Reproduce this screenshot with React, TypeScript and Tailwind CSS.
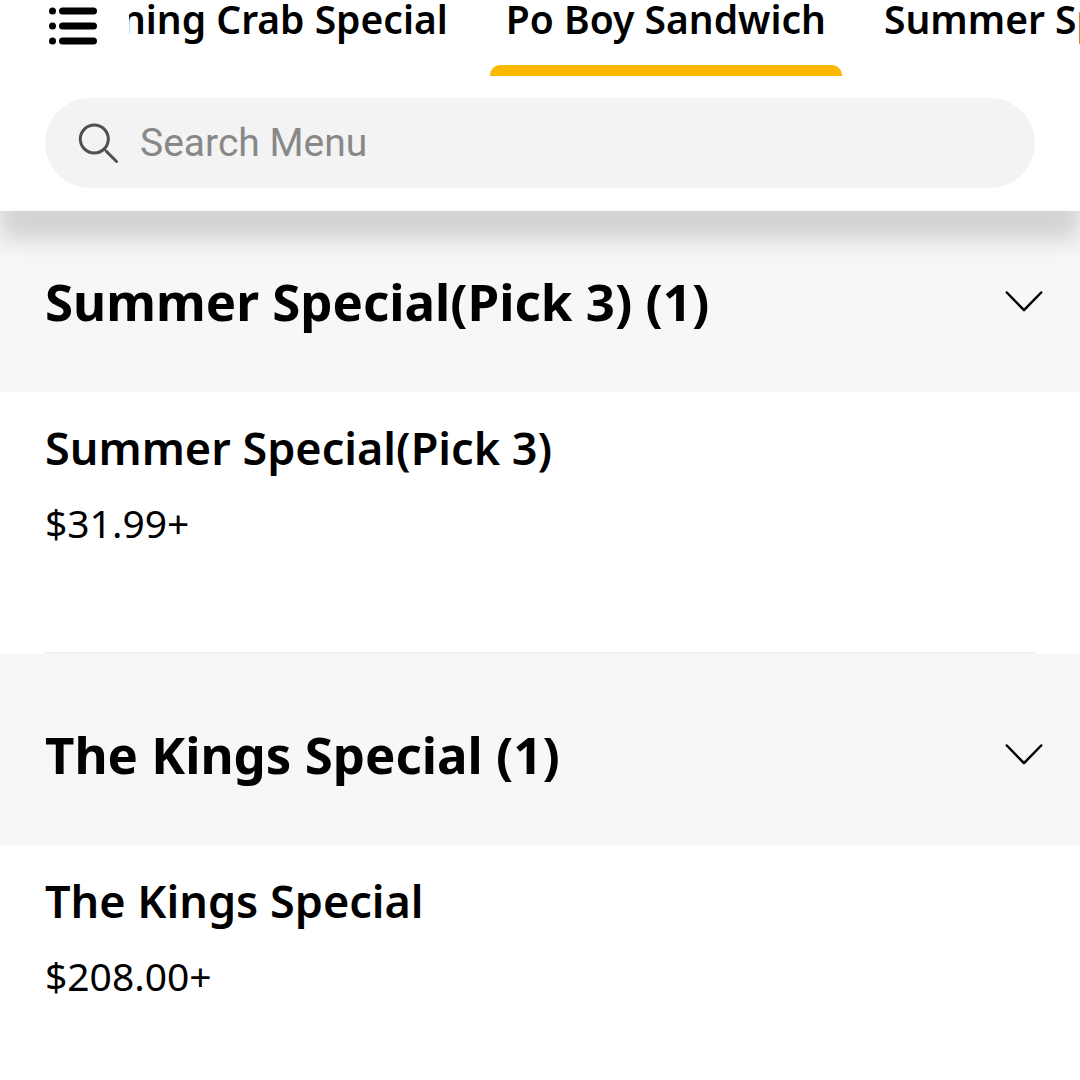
import React, { useEffect, useRef, useState } from "react"

type MenuItem = { name: string; price: string }
type MenuSection = { title: string; items: MenuItem[] }

const tabs = ["Evening Crab Special", "Po Boy Sandwich", "Summer Special(Pick 3)"]

const sections: MenuSection[] = [
  {
    title: "Summer Special(Pick 3)",
    items: [{ name: "Summer Special(Pick 3)", price: "$31.99+" }],
  },
  {
    title: "The Kings Special",
    items: [{ name: "The Kings Special", price: "$208.00+" }],
  },
]

// how much of the previous tab stays visible left of the active one
const TAB_PEEK = 361

function ListIcon() {
  return (
    <svg width="48" height="38" viewBox="0 0 48 38" aria-hidden="true">
      {[4, 19, 34].map((y) => (
        <g key={y}>
          <circle cx="3.5" cy={y} r="3.5" />
          <path d={`M13.5 ${y}H44.5`} stroke="black" strokeWidth="7" strokeLinecap="round" />
        </g>
      ))}
    </svg>
  )
}

function SearchIcon() {
  return (
    <svg
      width="42"
      height="42"
      viewBox="0 0 42 42"
      fill="none"
      stroke="#505050"
      strokeWidth="3"
      strokeLinecap="round"
      aria-hidden="true"
    >
      <circle cx="16.3" cy="17" r="14" />
      <path d="M28.5 29.5L38.5 39.5" />
      <path d="M26.5 27.3L28.5 29.5" strokeWidth="2" />
    </svg>
  )
}

function Chevron({ open }: { open: boolean }) {
  return (
    <svg
      width="38"
      height="22"
      viewBox="0 0 38 22"
      fill="none"
      stroke="black"
      strokeWidth="2.5"
      strokeLinecap="round"
      strokeLinejoin="round"
      className={open ? "" : "-rotate-90"}
      aria-hidden="true"
    >
      <path d="M1.8 2.5L19 20.1L36.2 2.5" />
    </svg>
  )
}

function Section({ section }: { section: MenuSection }) {
  const [open, setOpen] = useState(true)

  return (
    <section>
      <h2 className="bg-[#f7f7f9]">
        <button
          type="button"
          aria-expanded={open}
          onClick={() => setOpen(!open)}
          className="flex w-full items-center justify-between pt-[65px] pr-[37px] pb-14 pl-[45px] text-left text-[51px] leading-[70px] font-bold"
        >
          <span>
            {section.title} ({section.items.length})
          </span>
          <Chevron open={open} />
        </button>
      </h2>
      {open && (
        <ul className="px-[45px]">
          {section.items.map((item) => (
            <li key={item.name} className="border-b-2 border-[#f2f2f2] pt-6 pb-[99px]">
              <h3 className="text-[45px] leading-16 font-semibold">{item.name}</h3>
              <p className="mt-[13px] text-[39px] leading-15">{item.price}</p>
            </li>
          ))}
        </ul>
      )}
    </section>
  )
}

export default function App() {
  const [active, setActive] = useState("Po Boy Sandwich")
  const [query, setQuery] = useState("")
  const navRef = useRef<HTMLElement>(null)
  const activeRef = useRef<HTMLButtonElement>(null)

  useEffect(() => {
    const nav = navRef.current
    const tab = activeRef.current
    if (nav && tab) nav.scrollLeft = tab.offsetLeft - nav.offsetLeft - TAB_PEEK
  }, [active])

  return (
    <div className="h-screen overflow-hidden bg-white font-['Noto_Sans',sans-serif] text-black">
      <header className="relative z-10 bg-white pb-[23px] shadow-[0_29px_22px_rgba(0,0,0,0.15)]">
        <div className="flex h-[76px]">
          <button type="button" aria-label="All categories" className="shrink-0 self-start pt-[7px] pr-8 pl-[49px]">
            <ListIcon />
          </button>
          <nav ref={navRef} className="flex min-w-0 flex-1 gap-[26px] overflow-x-auto [scrollbar-width:none]">
            {tabs.map((tab) => (
              <button
                key={tab}
                ref={tab === active ? activeRef : null}
                type="button"
                onClick={() => setActive(tab)}
                className="flex shrink-0 flex-col justify-between text-[39px] leading-[38px] font-semibold"
              >
                <span className="px-4">{tab}</span>
                {tab === active && <span className="h-[11px] w-full rounded-t-[10px] bg-[#fbb800]" />}
              </button>
            ))}
          </nav>
        </div>
        <label className="mx-[45px] mt-[22px] flex h-[90px] items-center gap-5 rounded-full bg-[#f3f3f3] px-[33px]">
          <SearchIcon />
          <input
            type="search"
            aria-label="Search Menu"
            placeholder="Search Menu"
            value={query}
            onChange={(e) => setQuery(e.target.value)}
            className="min-w-0 flex-1 bg-transparent font-[Roboto,sans-serif] text-[39px] outline-none placeholder:text-[#888]"
          />
        </label>
      </header>
      {/* the list is scrolled slightly under the header */}
      <main className="-mt-[10px]">
        {sections.map((section) => (
          <Section key={section.title} section={section} />
        ))}
      </main>
    </div>
  )
}
